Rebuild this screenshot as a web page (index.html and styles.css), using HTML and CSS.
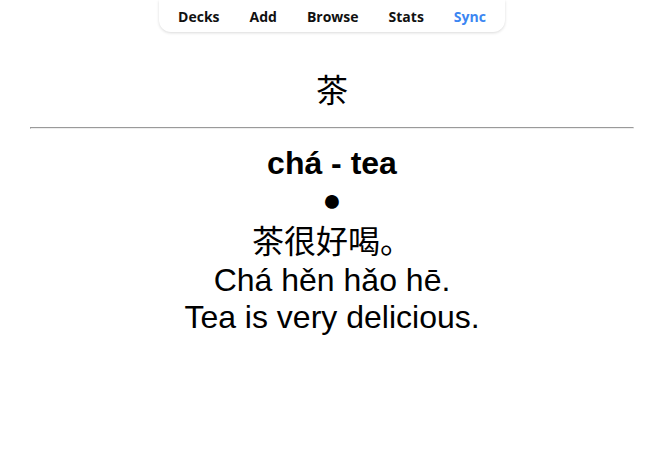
FILE: index.html
```html
<!DOCTYPE html>
<html>
<head>
<meta charset="utf-8">
<link rel="stylesheet" href="styles.css">
</head>
<body>
<div class="top">
  <nav class="nav">
    <span class="nav-item">Decks</span>
    <span class="nav-item">Add</span>
    <span class="nav-item">Browse</span>
    <span class="nav-item">Stats</span>
    <span class="nav-item active">Sync</span>
  </nav>
</div>
<div class="card">
  <div class="front">茶</div>
  <hr class="answer">
  <div class="meaning">chá - tea</div>
  <div class="dot">●</div>
  <div class="sentence">茶很好喝。</div>
  <div class="pinyin">Chá hěn hǎo hē.</div>
  <div class="english">Tea is very delicious.</div>
</div>
</body>
</html>
```
FILE: styles.css
```css
html, body {
  margin: 0;
  padding: 0;
  background: #fff;
}
.top {
  display: flex;
  justify-content: center;
}
.nav {
  display: flex;
  align-items: center;
  height: 32px;
  padding: 0 4.5px;
  background: #fff;
  border-radius: 0 0 12px 12px;
  box-shadow: 0 1px 3px rgba(0,0,0,0.15);
  font-family: "Open Sans", "Liberation Sans", sans-serif;
  font-weight: 700;
  font-size: 14px;
  color: #111;
}
.nav-item {
  padding: 0 15px;
}
.nav-item.active {
  color: #3b86f2;
}
.card {
  padding: 33px 30px 0;
  font-family: "Liberation Sans", Arial, "Noto Sans CJK SC", sans-serif;
  font-size: 32px;
  text-align: center;
  color: #000;
}
.answer {
  margin: 16px 0;
}
.meaning {
  font-weight: 700;
}
.sentence {
  margin-top: -3px;
}
```
